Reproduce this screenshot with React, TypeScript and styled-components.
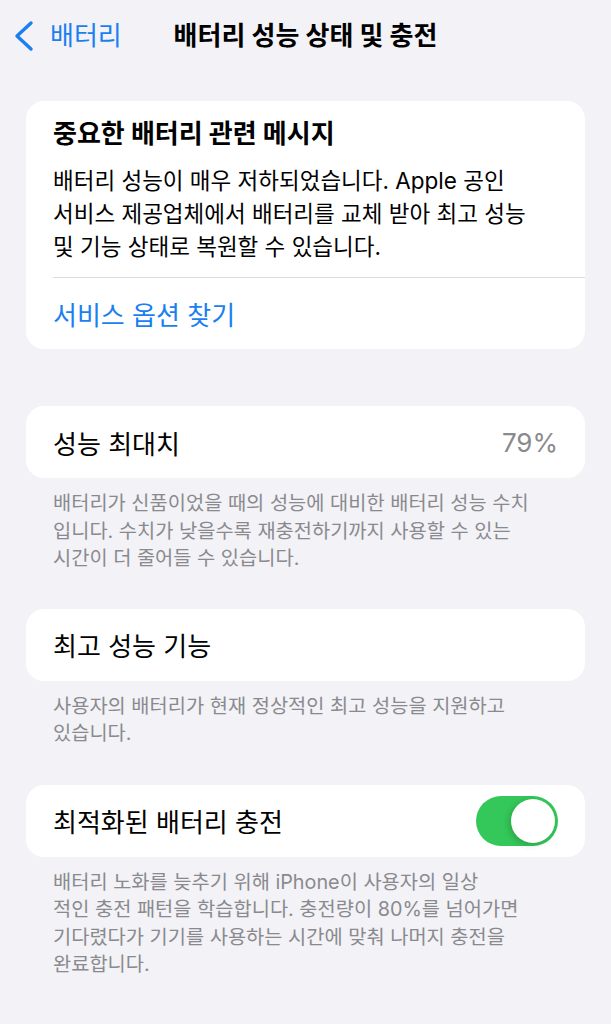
import { ReactElement } from 'react';
import styled, { createGlobalStyle } from 'styled-components';

/*********************************************************
*   STYLES
*********************************************************/
const GlobalStyle = createGlobalStyle`
    html, body {
        margin: 0;
        padding: 0;
        background: #f2f2f7;
    }
    body {
        font-family: Inter, "Noto Sans CJK KR", sans-serif;
        color: #000;
        -webkit-font-smoothing: antialiased;
    }
`;

const Page = styled.main`
    min-height: 1024px;
    background: #f2f2f7;
    padding: 0 26px;
    box-sizing: border-box;
`;

const NavBar = styled.header`
    height: 72px;
    display: grid;
    grid-template-columns: 1fr auto 1fr;
    align-items: center;
    margin: 0 -26px;
    padding: 0 14px;
`;

const BackButton = styled.div`
    display: flex;
    align-items: center;
    gap: 16px;
    color: #1a7ff0;
    font-size: 26px;
    line-height: 32px;
`;

const NavTitle = styled.h1`
    margin: 0;
    font-size: 26px;
    line-height: 32px;
    font-weight: 700;
`;

const Card = styled.section<{ $top: number }>`
    background: #fff;
    border-radius: 18px;
    margin-top: ${(p) => p.$top}px;
    overflow: hidden;
`;

const Message = styled.div`
    padding: 17px 27px 14px;
`;

const MessageTitle = styled.h2`
    margin: 0;
    font-size: 26px;
    line-height: 32px;
    font-weight: 700;
`;

const MessageBody = styled.p`
    margin: 14px 0 0;
    font-size: 22.5px;
    line-height: 33px;
`;

const Separator = styled.hr`
    border: none;
    height: 1px;
    background: #dcdce0;
    margin: 0 0 0 27px;
`;

const LinkRow = styled.div`
    height: 71px;
    display: flex;
    align-items: center;
    padding: 0 27px;
    color: #1a7ff0;
    font-size: 26px;
`;

const Row = styled.div`
    height: 72px;
    display: flex;
    align-items: center;
    justify-content: space-between;
    padding: 0 27px;
    font-size: 26px;
`;

const Value = styled.span`
    color: #8a8a8e;
    font-size: 26px;
`;

const Footer = styled.p`
    margin: 0;
    padding: 12px 27px 0;
    color: #8a8a8e;
    font-size: 19.8px;
    line-height: 27.5px;
`;

const Track = styled.div<{ $on: boolean }>`
    width: 82px;
    height: 50px;
    border-radius: 25px;
    background: ${(p) => (p.$on ? '#34c759' : '#e9e9ea')};
    display: flex;
    align-items: center;
    justify-content: ${(p) => (p.$on ? 'flex-end' : 'flex-start')};
    padding: 0 3px;
    box-sizing: border-box;
`;

const Knob = styled.div`
    width: 44px;
    height: 44px;
    border-radius: 50%;
    background: #fff;
    box-shadow: -2px 2px 6px rgba(0, 0, 0, 0.18);
`;

/*********************************************************
*   COMPONENTS
*********************************************************/
const Chevron = (): ReactElement => (
    <svg width="20" height="32" viewBox="0 0 20 32" fill="none">
        <path d="M17 3 L3 16 L17 29" stroke="#1a7ff0" strokeWidth="3.4"
            strokeLinecap="round" strokeLinejoin="round" />
    </svg>
);

const Toggle = ({ on }: { on: boolean }): ReactElement => (
    <Track $on={on}>
        <Knob />
    </Track>
);

const App = (): ReactElement => (
    <>
        <GlobalStyle />
        <Page>
            <NavBar>
                <BackButton>
                    <Chevron />
                    <span>배터리</span>
                </BackButton>
                <NavTitle>배터리 성능 상태 및 충전</NavTitle>
                <span />
            </NavBar>

            <Card $top={29}>
                <Message>
                    <MessageTitle>중요한 배터리 관련 메시지</MessageTitle>
                    <MessageBody>
                        배터리 성능이 매우 저하되었습니다. Apple 공인<br />
                        서비스 제공업체에서 배터리를 교체 받아 최고 성능<br />
                        및 기능 상태로 복원할 수 있습니다.
                    </MessageBody>
                </Message>
                <Separator />
                <LinkRow>서비스 옵션 찾기</LinkRow>
            </Card>

            <Card $top={57}>
                <Row>
                    <span>성능 최대치</span>
                    <Value>79%</Value>
                </Row>
            </Card>
            <Footer>
                배터리가 신품이었을 때의 성능에 대비한 배터리 성능 수치<br />
                입니다. 수치가 낮을수록 재충전하기까지 사용할 수 있는<br />
                시간이 더 줄어들 수 있습니다.
            </Footer>

            <Card $top={36}>
                <Row>
                    <span>최고 성능 기능</span>
                </Row>
            </Card>
            <Footer>
                사용자의 배터리가 현재 정상적인 최고 성능을 지원하고<br />
                있습니다.
            </Footer>

            <Card $top={37}>
                <Row>
                    <span>최적화된 배터리 충전</span>
                    <Toggle on />
                </Row>
            </Card>
            <Footer>
                배터리 노화를 늦추기 위해 iPhone이 사용자의 일상<br />
                적인 충전 패턴을 학습합니다. 충전량이 80%를 넘어가면<br />
                기다렸다가 기기를 사용하는 시간에 맞춰 나머지 충전을<br />
                완료합니다.
            </Footer>
        </Page>
    </>
);

/*********************************************************
*   EXPORT
*********************************************************/
export default App;
